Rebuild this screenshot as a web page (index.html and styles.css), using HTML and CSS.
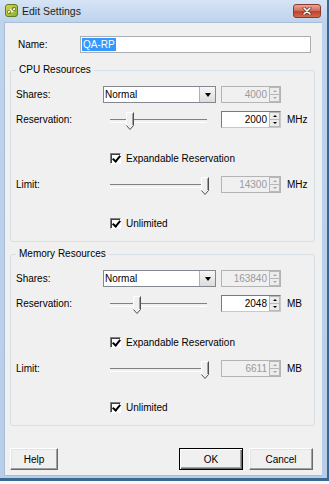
FILE: index.html
```html
<!DOCTYPE html>
<html lang="en">
<head>
    <meta charset="UTF-8">
    <title>Edit Settings</title>
    <link rel="stylesheet" href="styles.css">
</head>
<body>
    <div class="window">
        <div class="titlebar">
            <svg class="app-icon" width="13" height="13" viewBox="0 0 13 13">
                <defs>
                    <linearGradient id="ig" x1="0" y1="0" x2="1" y2="1">
                        <stop offset="0" stop-color="#e6d24a"/>
                        <stop offset="1" stop-color="#7fb236"/>
                    </linearGradient>
                </defs>
                <rect x="0.5" y="0.5" width="12" height="12" rx="2.5" fill="url(#ig)" stroke="#5d7d22"/>
                <path d="M3 8.5 L5.5 6 L7 7.5 L9.8 4.7" fill="none" stroke="#fffbe0" stroke-width="1.6" stroke-linecap="round"/>
                <rect x="2.5" y="6.5" width="3" height="3" rx="0.8" fill="none" stroke="#4f6d18" stroke-width="0.8"/>
                <rect x="7.5" y="3.5" width="3" height="3" rx="0.8" fill="none" stroke="#4f6d18" stroke-width="0.8"/>
            </svg>
            <span class="title">Edit Settings</span>
            <div class="close-btn">
                <svg width="10" height="8" viewBox="0 0 10 8">
                    <path d="M2 1 L8 7 M8 1 L2 7" stroke="#6b2a20" stroke-width="3" stroke-linecap="round"/>
                    <path d="M2 1 L8 7 M8 1 L2 7" stroke="#fff" stroke-width="1.6" stroke-linecap="round"/>
                </svg>
            </div>
        </div>

        <div class="client">
            <div class="name-row">
                <span class="name-label">Name:</span>
                <div class="textbox name-box"><span class="sel">QA-RP</span></div>
            </div>

            <fieldset class="group">
                <legend>CPU Resources</legend>
                <div class="row row-shares">
                    <span class="lbl">Shares:</span>
                    <div class="mid"><div class="combo"><span class="combo-text">Normal</span><span class="drop"></span></div></div>
                    <div class="spin disabled"><span class="val">4000</span><span class="arrows"><span class="arr up"></span><span class="arr down"></span></span></div>
                </div>
                <div class="row row-res">
                    <span class="lbl">Reservation:</span>
                    <div class="mid"><div class="slider">
                        <svg class="thumb" style="left: 16px" width="8" height="18" viewBox="0 0 8 18"><path d="M0.5 17 V0.5 H7.5 V13.5 L4 17.5 L0.5 13.5" fill="#f0f0f0"/><path d="M0.5 13.5 V0.5 H7" fill="none" stroke="#fff"/><path d="M7.5 0.5 V13.5 L4 17.5 L0.5 13.5" fill="none" stroke="#505050"/><path d="M6.5 1.5 V13" fill="none" stroke="#a0a0a0"/></svg>
                    </div></div>
                    <div class="spin"><span class="val">2000</span><span class="arrows"><span class="arr up"></span><span class="arr down"></span></span></div>
                    <span class="unit">MHz</span>
                </div>
                <div class="check-row check-exp">
                    <span class="checkbox"></span><span class="check-text">Expandable Reservation</span>
                </div>
                <div class="row row-limit">
                    <span class="lbl">Limit:</span>
                    <div class="mid"><div class="slider">
                        <svg class="thumb" style="left: 91px" width="8" height="18" viewBox="0 0 8 18"><path d="M0.5 17 V0.5 H7.5 V13.5 L4 17.5 L0.5 13.5" fill="#f0f0f0"/><path d="M0.5 13.5 V0.5 H7" fill="none" stroke="#fff"/><path d="M7.5 0.5 V13.5 L4 17.5 L0.5 13.5" fill="none" stroke="#505050"/><path d="M6.5 1.5 V13" fill="none" stroke="#a0a0a0"/></svg>
                    </div></div>
                    <div class="spin disabled"><span class="val">14300</span><span class="arrows"><span class="arr up"></span><span class="arr down"></span></span></div>
                    <span class="unit">MHz</span>
                </div>
                <div class="check-row check-unl">
                    <span class="checkbox"></span><span class="check-text">Unlimited</span>
                </div>
            </fieldset>

            <fieldset class="group group-mem">
                <legend>Memory Resources</legend>
                <div class="row row-shares">
                    <span class="lbl">Shares:</span>
                    <div class="mid"><div class="combo"><span class="combo-text">Normal</span><span class="drop"></span></div></div>
                    <div class="spin disabled"><span class="val">163840</span><span class="arrows"><span class="arr up"></span><span class="arr down"></span></span></div>
                </div>
                <div class="row row-res">
                    <span class="lbl">Reservation:</span>
                    <div class="mid"><div class="slider">
                        <svg class="thumb" style="left: 23px" width="8" height="18" viewBox="0 0 8 18"><path d="M0.5 17 V0.5 H7.5 V13.5 L4 17.5 L0.5 13.5" fill="#f0f0f0"/><path d="M0.5 13.5 V0.5 H7" fill="none" stroke="#fff"/><path d="M7.5 0.5 V13.5 L4 17.5 L0.5 13.5" fill="none" stroke="#505050"/><path d="M6.5 1.5 V13" fill="none" stroke="#a0a0a0"/></svg>
                    </div></div>
                    <div class="spin"><span class="val">2048</span><span class="arrows"><span class="arr up"></span><span class="arr down"></span></span></div>
                    <span class="unit">MB</span>
                </div>
                <div class="check-row check-exp">
                    <span class="checkbox"></span><span class="check-text">Expandable Reservation</span>
                </div>
                <div class="row row-limit">
                    <span class="lbl">Limit:</span>
                    <div class="mid"><div class="slider">
                        <svg class="thumb" style="left: 91px" width="8" height="18" viewBox="0 0 8 18"><path d="M0.5 17 V0.5 H7.5 V13.5 L4 17.5 L0.5 13.5" fill="#f0f0f0"/><path d="M0.5 13.5 V0.5 H7" fill="none" stroke="#fff"/><path d="M7.5 0.5 V13.5 L4 17.5 L0.5 13.5" fill="none" stroke="#505050"/><path d="M6.5 1.5 V13" fill="none" stroke="#a0a0a0"/></svg>
                    </div></div>
                    <div class="spin disabled"><span class="val">6611</span><span class="arrows"><span class="arr up"></span><span class="arr down"></span></span></div>
                    <span class="unit">MB</span>
                </div>
                <div class="check-row check-unl">
                    <span class="checkbox"></span><span class="check-text">Unlimited</span>
                </div>
            </fieldset>

            <div class="buttons">
                <button class="btn btn-help">Help</button>
                <button class="btn btn-ok">OK</button>
                <button class="btn btn-cancel">Cancel</button>
            </div>
        </div>
    </div>
</body>
</html>
```

FILE: styles.css
```css
* {
    box-sizing: border-box;
}
body {
    margin: 0;
    background: #f4f6f8;
    font-family: "Liberation Sans", Arial, sans-serif;
    font-size: 10px;
    color: #000;
}
.window {
    width: 329px;
    height: 481px;
    padding: 0 5px 2px 4px;
    background: linear-gradient(#d6e4f5, #bed3ec 22px, #b8cee8);
    border-right: 2px solid #3b6891;
    border-bottom: 3px solid #3b6891;
    display: flex;
    flex-direction: column;
}
.titlebar {
    height: 22px;
    display: flex;
    align-items: center;
    padding-bottom: 1px;
}
.app-icon {
    margin-left: 1px;
    flex-shrink: 0;
}
.title {
    margin-left: 4px;
    font-size: 10.5px;
    color: #1e1e1e;
}
.close-btn {
    margin-left: auto;
    margin-right: 1px;
    width: 28px;
    height: 14px;
    border: 1px solid #8a3a2e;
    border-radius: 3px;
    background: linear-gradient(#e8a596, #d4705f 45%, #c2402c 55%, #cf6a4e);
    display: flex;
    align-items: center;
    justify-content: center;
}
.client {
    flex: 1;
    background: #f0f0f0;
    border: 1px solid #a8bdd6;
    border-right: none;
    padding: 12px 7px 0 5px;
    display: flex;
    flex-direction: column;
}
.name-row {
    display: flex;
    align-items: center;
    height: 18px;
    padding-left: 8px;
}
.name-label {
    width: 62px;
}
.textbox {
    height: 17px;
    background: #fff;
    border: 1px solid #abadb3;
    display: flex;
    align-items: center;
    padding-left: 1px;
}
.name-box {
    width: 231px;
}
.sel {
    background: #3399ff;
    color: #fff;
    padding: 0 1px;
    line-height: 13px;
}
.group {
    margin: 11px 0 0 0;
    padding: 0 5px 11px;
    border: 1px solid #d5dfe5;
    border-radius: 3px;
    min-width: 0;
}
.group-mem {
    margin-top: 6px;
}
.group legend {
    padding: 0 3px;
    line-height: 12px;
}
.row {
    display: flex;
    align-items: center;
    height: 17px;
}
.row-shares {
    margin-top: 10px;
}
.row-res {
    margin-top: 8px;
}
.row-limit {
    margin-top: 11px;
}
.check-exp,
.check-unl {
    margin-top: 24px;
}
.lbl {
    width: 87px;
}
.mid {
    width: 118px;
    height: 17px;
}
.combo {
    width: 113px;
    height: 17px;
    background: #fff;
    border: 1px solid #828790;
    display: flex;
    align-items: center;
}
.combo-text {
    flex: 1;
    padding-left: 1px;
}
.drop {
    width: 16px;
    height: 15px;
    background: linear-gradient(#f6f6f6, #dcdcdc);
    border-left: 1px solid #b0b0b0;
    display: flex;
    align-items: center;
    justify-content: center;
}
.drop::after {
    content: "";
    border-left: 3.5px solid transparent;
    border-right: 3.5px solid transparent;
    border-top: 4px solid #000;
}
.slider {
    position: relative;
    width: 97px;
    height: 17px;
    margin-left: 7px;
}
.slider::before {
    content: "";
    position: absolute;
    left: 0;
    right: 0;
    top: 8px;
    height: 2px;
    border-top: 1px solid #808080;
    border-bottom: 1px solid #fff;
}
.thumb {
    position: absolute;
    top: 1px;
}
.spin {
    width: 60px;
    height: 17px;
    background: #fff;
    border: 1px solid #7a7a7a;
    border-right-color: #c8c8c8;
    border-bottom-color: #c8c8c8;
    display: flex;
}
.spin.disabled {
    background: #f0f0f0;
    border-color: #b4b4b4;
    color: #9a9a9a;
}
.val {
    flex: 1;
    text-align: right;
    padding-right: 2px;
    line-height: 15px;
}
.arrows {
    width: 11px;
    display: flex;
    flex-direction: column;
}
.arr {
    flex: 1;
    background: #ececec;
    border: 1px solid #b8b8b8;
    display: flex;
    align-items: center;
    justify-content: center;
}
.arr.down {
    border-top: none;
}
.arr.up::after {
    content: "";
    border-left: 2px solid transparent;
    border-right: 2px solid transparent;
    border-bottom: 2px solid #000;
}
.arr.down::after {
    content: "";
    border-left: 2px solid transparent;
    border-right: 2px solid transparent;
    border-top: 2px solid #000;
}
.disabled .arr::after {
    border-top-color: #a8a8a8;
    border-bottom-color: #a8a8a8;
}
.unit {
    margin-left: 6px;
}
.check-row {
    display: flex;
    align-items: center;
    height: 13px;
    padding-left: 94px;
}
.checkbox {
    position: relative;
    width: 11px;
    height: 11px;
    background: #fff;
    border: 1px solid #fff;
    border-top-color: #808080;
    border-left-color: #808080;
    box-shadow: inset 1px 1px #404040;
}
.checkbox::after {
    content: "";
    position: absolute;
    left: 3px;
    top: 0px;
    width: 3px;
    height: 6px;
    border-right: 2px solid #000;
    border-bottom: 2px solid #000;
    transform: rotate(40deg);
}
.check-text {
    margin-left: 5px;
}
.buttons {
    margin-top: auto;
    margin-bottom: 5px;
    display: flex;
}
.btn {
    height: 22px;
    font-family: inherit;
    font-size: 10px;
    background: #f0f0f0;
    border: 1px solid;
    border-color: #fff #696969 #696969 #fff;
    box-shadow: inset -1px -1px #a0a0a0, inset 1px 1px #e3e3e3;
    padding: 0;
}
.btn-help {
    width: 48px;
}
.btn-ok {
    width: 64px;
    margin-left: auto;
    border-color: #000;
    box-shadow: inset 1px 1px #fff, inset -1px -1px #696969, inset -2px -2px #a0a0a0;
}
.btn-cancel {
    width: 64px;
    margin-left: 6px;
    margin-right: 2px;
}
```
